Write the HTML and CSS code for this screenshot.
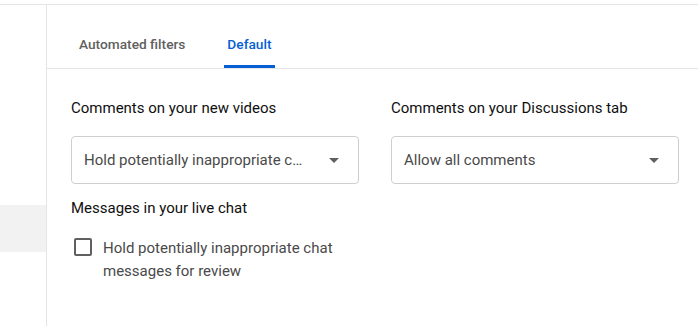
FILE: index.html
```html
<!DOCTYPE html>
<html>
<head>
<meta charset="utf-8">
<link rel="stylesheet" href="styles.css">
</head>
<body>
<div class="topgap"></div>
<div class="layout">
  <aside class="sidebar">
    <div class="side-item"></div>
  </aside>
  <main class="content">
    <nav class="tabs">
      <div class="tab">Automated filters</div>
      <div class="tab active">Default</div>
    </nav>
    <section class="settings">
      <div class="field">
        <div class="label">Comments on your new videos</div>
        <div class="select">
          <span class="select-text">Hold potentially inappropriate comments for review</span>
          <svg class="arrow" width="10" height="5" viewBox="0 0 10 5"><path d="M0 0h10L5 5z" fill="#606060"/></svg>
        </div>
      </div>
      <div class="field">
        <div class="label">Comments on your Discussions tab</div>
        <div class="select">
          <span class="select-text">Allow all comments</span>
          <svg class="arrow" width="10" height="5" viewBox="0 0 10 5"><path d="M0 0h10L5 5z" fill="#606060"/></svg>
        </div>
      </div>
      <div class="field live">
        <div class="label">Messages in your live chat</div>
        <label class="check-row">
          <span class="checkbox"></span>
          <span class="check-text">Hold potentially inappropriate chat messages for review</span>
        </label>
      </div>
    </section>
  </main>
</div>
</body>
</html>
```
FILE: styles.css
```css
html, body {
  margin: 0;
  padding: 0;
  background: #fff;
  height: 326px;
  overflow: hidden;
  font-family: Roboto, "Liberation Sans", sans-serif;
}
.topgap {
  height: 4px;
}
.layout {
  display: flex;
  border-top: 1px solid #e5e5e5;
  height: 321px;
}
.sidebar {
  flex: none;
  width: 47px;
  box-sizing: border-box;
  border-right: 1px solid #e5e5e5;
  padding-top: 200px;
}
.side-item {
  height: 47px;
  background: #f2f2f2;
}
.content {
  flex: 1;
  min-width: 0;
}
.tabs {
  display: flex;
  height: 63px;
  border-bottom: 1px solid #e5e5e5;
  padding-left: 29px;
  gap: 36px;
}
.tab {
  box-sizing: border-box;
  height: 63px;
  padding: 29px 3px 0;
  line-height: 20px;
  font-size: 13.7px;
  font-weight: 500;
  color: #606060;
  border-bottom: 3px solid transparent;
}
.tab.active {
  color: #065fd4;
  border-bottom-color: #065fd4;
}
.settings {
  display: grid;
  grid-template-columns: 288px 288px;
  column-gap: 32px;
  padding: 27px 0 0 24px;
}
.label {
  font-size: 15px;
  line-height: 24px;
  color: #0f0f0f;
}
.select {
  margin-top: 16px;
  height: 48px;
  box-sizing: border-box;
  border: 1px solid #cfcfcf;
  border-radius: 4px;
  display: flex;
  align-items: center;
  padding: 0 19px 0 12px;
}
.select-text {
  flex: 1;
  min-width: 0;
  margin-right: 24px;
  white-space: nowrap;
  overflow: hidden;
  text-overflow: ellipsis;
  font-size: 15px;
  color: #4a4a4a;
}
.arrow {
  flex: none;
  display: block;
}
.live {
  grid-column: 1;
  margin-top: 12px;
}
.check-row {
  display: flex;
  align-items: flex-start;
  margin-top: 17px;
}
.checkbox {
  flex: none;
  box-sizing: border-box;
  width: 18px;
  height: 18px;
  margin: 1px 11px 0 3px;
  border: 2px solid #606060;
  border-radius: 2px;
}
.check-text {
  font-size: 15px;
  line-height: 23px;
  color: #4a4a4a;
  max-width: 240px;
}
```
